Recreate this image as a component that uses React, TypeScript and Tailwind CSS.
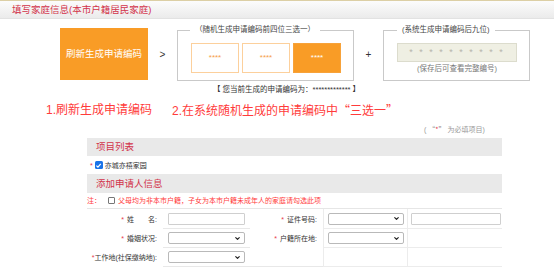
import { ChevronDown } from "lucide-react";

const red = "text-[#ff3b3b]";

function Star() {
	return <span className="text-[#e8394a] mr-[3px]">*</span>;
}

function Select({ w }: { w: string }) {
	return (
		<div
			className={`${w} h-[12px] border border-[#b9b9b9] rounded-[2px] bg-white flex items-center justify-end pr-[3px]`}
		>
			<ChevronDown className="w-[7px] h-[7px] text-[#222]" strokeWidth={4} />
		</div>
	);
}

function TextBox({ w }: { w: string }) {
	return <div className={`${w} h-[12px] border border-[#cfcfcf] rounded-[1px] bg-white`} />;
}

function Label({ children }: { children: React.ReactNode }) {
	return (
		<div className="flex items-center justify-end pr-[6px] text-[7px] text-[#333]">
			{children}
		</div>
	);
}

function CodeBox({ active }: { active?: boolean }) {
	return (
		<div
			className={
				active
					? "w-[48px] h-[30px] bg-[#f99c26] border border-[#f7a23a] flex items-center justify-center text-white text-[8px]"
					: "w-[48px] h-[30px] bg-white border border-[#fcd09c] flex items-center justify-center text-[#f6a04c] text-[8px]"
			}
		>
			****
		</div>
	);
}

export default function App() {
	return (
		<div className="w-[554px] h-[267px] overflow-hidden bg-white font-['Liberation_Sans','Noto_Sans_CJK_SC',sans-serif] leading-none">
			<div className="h-px bg-[#dccfa5]" />
			<div className="h-[18px] bg-gradient-to-b from-[#fcfcfc] to-[#ebebeb] border-b border-[#e2e2e2] flex items-center pl-[12px] text-[9.5px] text-[#d2334a]">
				填写家庭信息(本市户籍居民家庭)
			</div>

			{/* 编码选择 */}
			<div className="mt-[9px] flex pl-[60px] h-[53px]">
				<button
					type="button"
					className="w-[88px] h-[52px] bg-[#f99c26] text-white text-[9.5px] flex items-center justify-center"
				>
					刷新生成申请编码
				</button>
				<span className="w-[29px] flex items-center justify-center text-[10px] text-[#333]">
					&gt;
				</span>
				<div className="relative mt-[2px] w-[177px] h-[51px] border border-[#c9c9c9]">
					<span className="absolute -top-[6px] left-[12px] px-[5px] bg-white text-[7.5px] leading-[10px] text-[#444]">
						（随机生成申请编码前四位三选一）
					</span>
					<div className="pt-[12px] pl-[13px] flex gap-[3px]">
						<CodeBox />
						<CodeBox />
						<CodeBox active />
					</div>
				</div>
				<span className="w-[29px] flex items-center justify-center text-[10px] text-[#333]">
					+
				</span>
				<div className="relative mt-[2px] w-[147px] h-[51px] border border-[#c9c9c9]">
					<span className="absolute -top-[6px] left-[13px] px-[5px] bg-white text-[7.5px] leading-[10px] text-[#444]">
						(系统生成申请编码后九位)
					</span>
					<div className="pt-[12px] pl-[13px]">
						<div className="w-[120px] h-[19px] bg-[#efefe3] border border-[#dcdccd] flex items-center justify-center text-[9px] text-[#b5b5ab] tracking-[2px]">
							* * * * * * * * * *
						</div>
						<div className="w-[120px] mt-[2px] text-center text-[7.5px] leading-[10px] text-[#777]">
							(保存后可查看完整编号)
						</div>
					</div>
				</div>
			</div>

			<div className="mt-[4px] pl-[213px] text-[7.5px] leading-[10px] text-[#333]">
				【 您当前生成的申请编码为：************* 】
			</div>

			<div className={`mt-[7px] pl-[46px] flex gap-[20px] text-[12px] leading-[16px] ${red}`}>
				<span>1.刷新生成申请编码</span>
				<span>
					2.在系统随机生成的申请编码中
					<span className="font-['Noto_Sans_CJK_SC',sans-serif]">“三选一”</span>
				</span>
			</div>

			<div className="mt-[5px] pl-[424px] text-[7px] leading-[10px] text-[#999] whitespace-pre">
				{"( "}
				<span className="font-['Noto_Sans_CJK_SC',sans-serif]">
					“<span className="text-[#e8394a]">*</span>”
				</span>
				{" 为必填项目)"}
			</div>

			{/* 表格 */}
			<div className="mt-[3px] ml-[87px] w-[415px]">
				<div className="h-[18px] bg-[#e9e9e9] pl-[9px] flex items-center text-[9.5px] text-[#d2334a]">
					项目列表
				</div>
				<div className="h-[18px] pl-[3px] flex items-center text-[7px] text-[#333]">
					<span className="text-[#e8394a] mr-[2px]">*</span>
					<span className="w-[8px] h-[8px] rounded-[1.5px] bg-[#1a73e8] flex items-center justify-center mr-[2px]">
						<svg viewBox="0 0 10 10" className="w-[7px] h-[7px]">
							<path d="M2 5.2 L4.2 7.4 L8.2 2.8" fill="none" stroke="#fff" strokeWidth="1.8" />
						</svg>
					</span>
					亦城亦禧家园
				</div>
				<div className="h-[19px] bg-[#e9e9e9] pl-[9px] flex items-center text-[9.5px] text-[#d2334a]">
					添加申请人信息
				</div>
				<div className="h-[16px] flex items-center border-b border-[#e6e6e6] text-[7px] text-[#ff3b3b]">
					<span>注：</span>
					<span className="ml-[7px] mr-[3px] w-[7px] h-[7px] border border-[#777] rounded-[1px] bg-white" />
					父母均为非本市户籍，子女为本市户籍未成年人的家庭请勾选此项
				</div>

				<div className="grid grid-cols-[76px_87px_73px_84px_95px] grid-rows-[20px_19px_19px]">
					<Label>
						<Star />姓<span className="w-[14px]" />名:
					</Label>
					<div className="flex items-center pl-[5px] border-b border-[#e8e8e8]">
						<TextBox w="w-[77px]" />
					</div>
					<Label>
						<Star />证件号码:
					</Label>
					<div className="flex items-center pl-[4px] border-l border-b border-[#ececec]">
						<Select w="w-[76px]" />
					</div>
					<div className="flex items-center pl-[3px] border-l border-b border-[#ececec]">
						<TextBox w="w-[90px]" />
					</div>

					<Label>
						<Star />婚姻状况:
					</Label>
					<div className="flex items-center pl-[5px] border-b border-[#e8e8e8]">
						<Select w="w-[77px]" />
					</div>
					<Label>
						<Star />户籍所在地:
					</Label>
					<div className="flex items-center pl-[4px] border-l border-b border-[#ececec]">
						<Select w="w-[76px]" />
					</div>
					<div className="border-l border-b border-[#ececec]" />

					<Label>
						<span className="text-[#e8394a]">*</span>工作地(社保缴纳地):
					</Label>
					<div className="flex items-center pl-[5px] border-b border-[#e8e8e8]">
						<Select w="w-[77px]" />
					</div>
					<div className="border-b border-[#e8e8e8]" />
					<div className="border-l border-b border-[#ececec]" />
					<div className="border-l border-b border-[#ececec]" />
				</div>
				<div className="h-[10px] bg-[#e9e9e9]" />
			</div>
		</div>
	);
}
